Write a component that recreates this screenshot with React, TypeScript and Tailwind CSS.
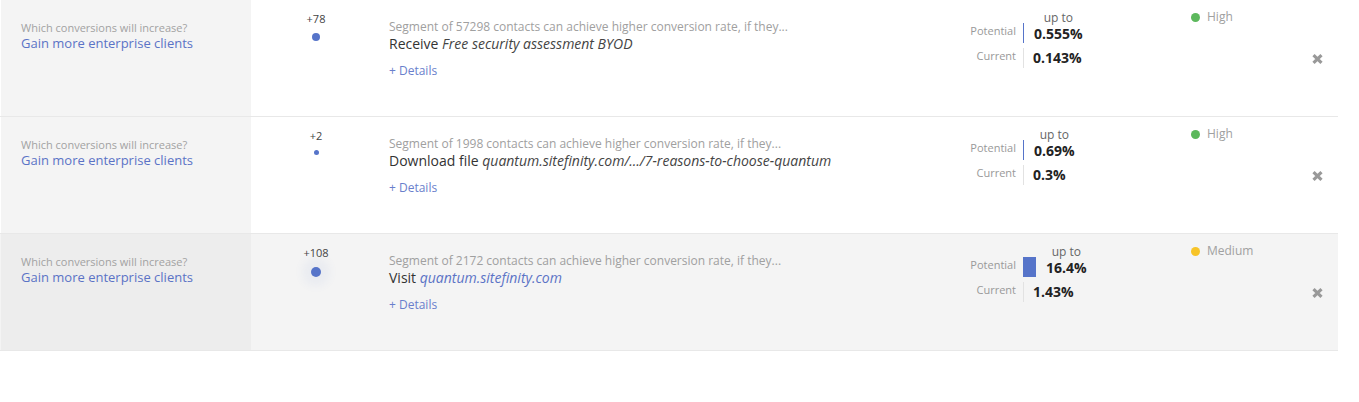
import React from "react";

type Row = {
  segment: string;
  action: string;
  target: string;
  targetLink?: boolean;
  score: string;
  dot: number;
  halo?: boolean;
  potential: string;
  current: string;
  barWidth: number;
  status: string;
  statusColor: string;
  active?: boolean;
};

const rows: Row[] = [
  {
    segment: "Segment of 57298 contacts can achieve higher conversion rate, if they...",
    action: "Receive",
    target: "Free security assessment BYOD",
    score: "+78",
    dot: 8,
    potential: "0.555%",
    current: "0.143%",
    barWidth: 1,
    status: "High",
    statusColor: "#5cb85c",
  },
  {
    segment: "Segment of 1998 contacts can achieve higher conversion rate, if they...",
    action: "Download file",
    target: "quantum.sitefinity.com/.../7-reasons-to-choose-quantum",
    score: "+2",
    dot: 5,
    potential: "0.69%",
    current: "0.3%",
    barWidth: 1,
    status: "High",
    statusColor: "#5cb85c",
  },
  {
    segment: "Segment of 2172 contacts can achieve higher conversion rate, if they...",
    action: "Visit",
    target: "quantum.sitefinity.com",
    targetLink: true,
    score: "+108",
    dot: 10,
    halo: true,
    potential: "16.4%",
    current: "1.43%",
    barWidth: 13,
    status: "Medium",
    statusColor: "#f7c428",
    active: true,
  },
];

function CloseIcon() {
  return (
    <svg width="11" height="10" viewBox="0 0 11 10" className="block">
      <path d="M1.5 1.2 L9.5 8.8 M9.5 1.2 L1.5 8.8" stroke="#999" strokeWidth="3.2" strokeLinecap="butt" />
    </svg>
  );
}

function RowView({ r }: { r: Row }) {
  return (
    <div
      className={`flex h-[117px] w-[1338px] border-b border-[#e8e8e8] pl-px ${
        r.active ? "bg-[#f4f4f4]" : "bg-white"
      }`}
    >
      <div
        className={`w-[250px] shrink-0 pl-[20px] pt-[20px] ${
          r.active ? "bg-[#ededed]" : "bg-[#f4f4f4]"
        }`}
      >
        <div className="text-[11px] leading-[16px] text-[#a2a2a2]">Which conversions will increase?</div>
        <div className="text-[13px] leading-[14px] text-[#5b73c6]">Gain more enterprise clients</div>
      </div>
      <div className="flex w-[130px] shrink-0 flex-col items-center pt-[11px]">
        <div className="text-[11px] leading-[16px] text-[#444]">{r.score}</div>
        <div className="mt-[6px] flex h-[10px] items-start justify-center">
          <div
            className={`rounded-full bg-[#5674c9] ${
              r.halo ? "shadow-[0_0_8px_9px_rgba(86,116,201,0.06)]" : ""
            }`}
            style={{ width: r.dot, height: r.dot }}
          />
        </div>
      </div>
      <div className="w-[560px] shrink-0 pl-[8px] pt-[19px]">
        <div className="text-[12px] leading-[16px] text-[#a0a0a0]">{r.segment}</div>
        <div className="text-[14px] leading-[18px] text-[#333]">
          {r.action}{" "}
          <span className={`italic ${r.targetLink ? "text-[#5b73c6]" : "text-[#444]"}`}>{r.target}</span>
        </div>
        <div className="mt-[10px] text-[12px] leading-[16px] text-[#6a7fcc]">+ Details</div>
      </div>
      <div className="w-[250px] shrink-0 pt-[11px]">
        <div className="flex h-[32px] items-stretch">
          <div className="flex w-[75px] items-end justify-end pb-[4px] text-[11px] leading-[16px] text-[#999]">
            Potential
          </div>
          <div className="ml-[7px] mt-[12px] bg-[#5674c9]" style={{ width: r.barWidth }} />
          <div className="ml-[10px] flex flex-col items-center">
            <div className="text-[12px] leading-[14px] text-[#666]">up to</div>
            <div className="text-[14px] font-bold leading-[17px] text-[#222]">{r.potential}</div>
          </div>
        </div>
        <div className="mt-[5px] flex h-[20px] items-start">
          <div className="w-[75px] text-right text-[11px] leading-[16px] text-[#999]">Current</div>
          <div className="ml-[7px] h-[20px] w-px bg-[#e2e2e2]" />
          <div className="ml-[9px] mt-px text-[14px] font-bold leading-[18px] text-[#222]">{r.current}</div>
        </div>
      </div>
      <div className="w-[121px] shrink-0 pt-[9px]">
        <div className="flex items-center gap-[7px]">
          <div className="h-[9px] w-[9px] rounded-full" style={{ backgroundColor: r.statusColor }} />
          <span className="text-[12px] leading-[16px] text-[#a0a0a0]">{r.status}</span>
        </div>
      </div>
      <div className="w-[26px] shrink-0 pt-[54px]">
        <CloseIcon />
      </div>
    </div>
  );
}

export default function App() {
  return (
    <div
      className="h-[402px] w-[1359px] bg-white"
      style={{ fontFamily: '"Open Sans", "Noto Sans", sans-serif' }}
    >
      {rows.map((r, i) => (
        <RowView key={i} r={r} />
      ))}
    </div>
  );
}
